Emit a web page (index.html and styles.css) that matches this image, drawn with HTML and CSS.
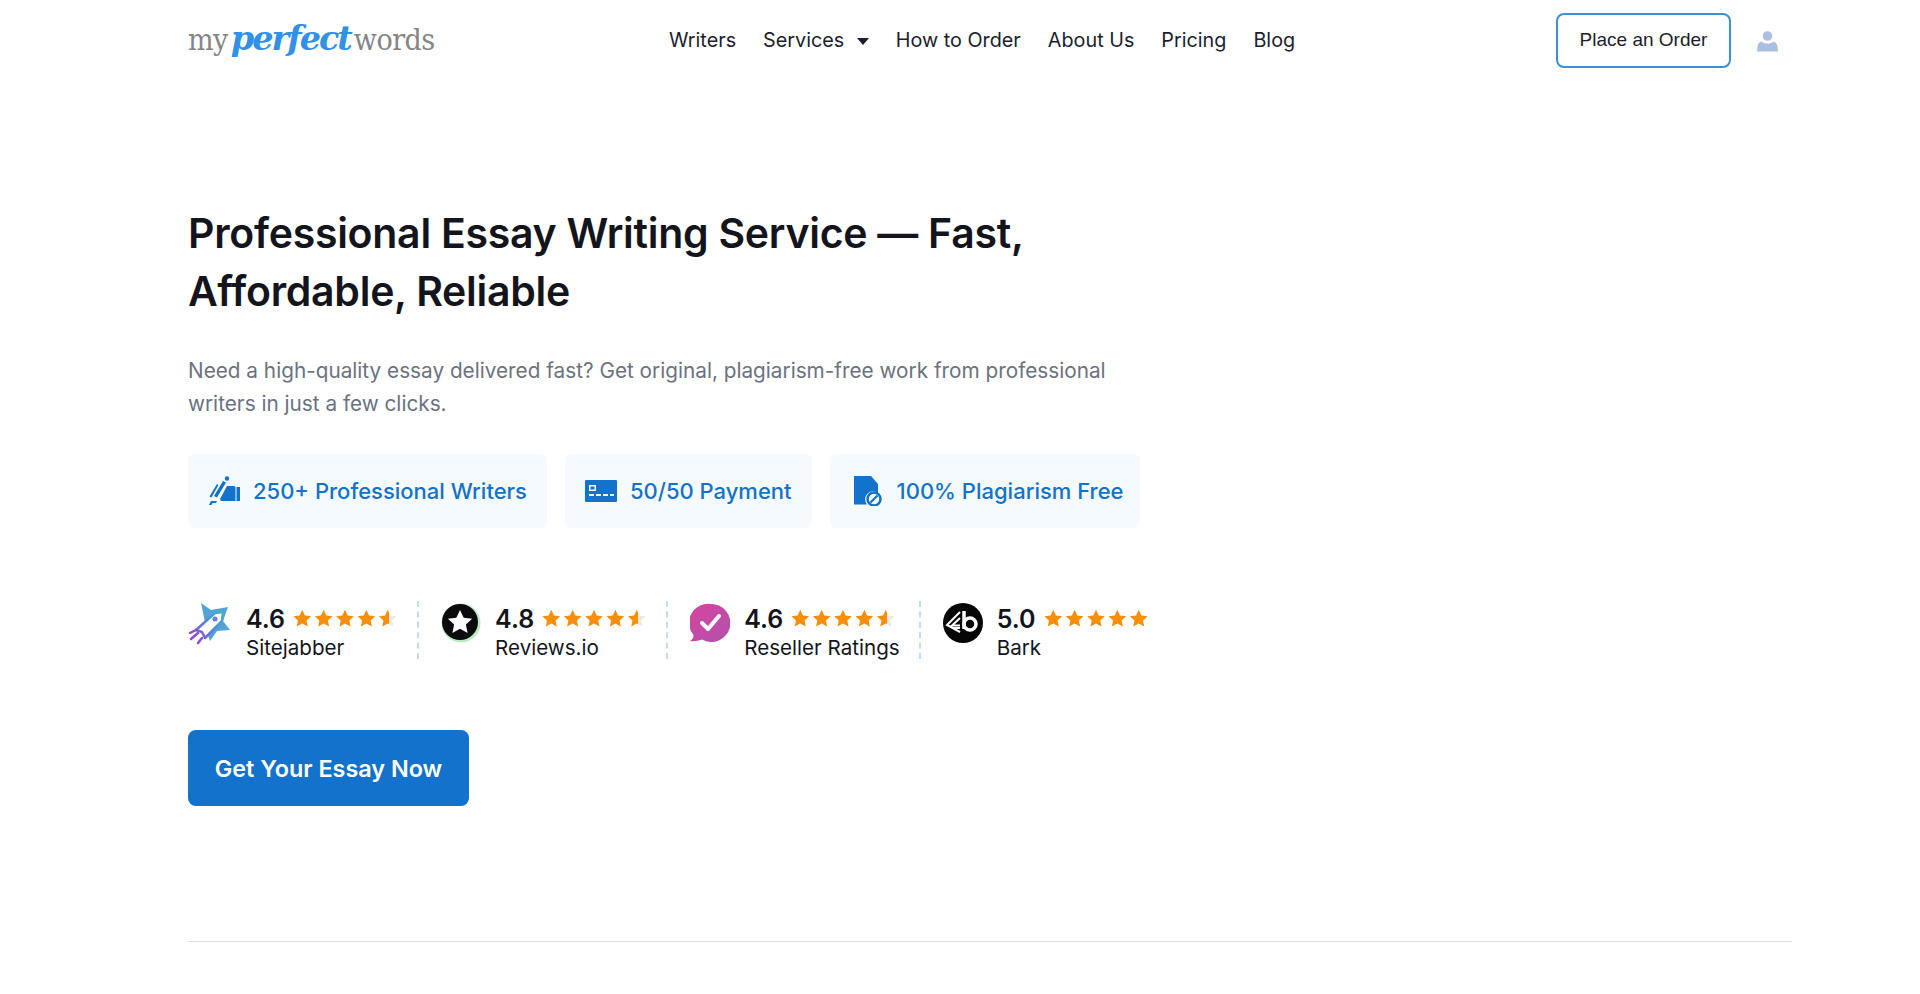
FILE: index.html
```html
<!DOCTYPE html>
<html lang="en">
<head>
    <meta charset="UTF-8">
    <meta name="viewport" content="width=device-width, initial-scale=1.0">
    <title>MyPerfectWords</title>
    <link rel="stylesheet" href="styles.css">
</head>
<body>
    <svg class="defs" width="0" height="0">
        <defs>
            <path id="star" d="M10 0.8l2.8 6 6.500.8-4.800 4.400 1.300 6.400L10 15.200l-5.800 3.200 1.300-6.400L.7 7.600l6.500-.8z"/>
            <linearGradient id="half"><stop offset="55%" stop-color="#f98e0b"/><stop offset="55%" stop-color="#eee9df"/></linearGradient>
            <linearGradient id="jabber" x1="0" y1="1" x2="1" y2="0"><stop offset="0%" stop-color="#8a4fd6"/><stop offset="55%" stop-color="#4f8fd8"/><stop offset="100%" stop-color="#3fb4c4"/></linearGradient>
            <linearGradient id="pink" x1="0" y1="0" x2="1" y2="1"><stop offset="0%" stop-color="#d8449e"/><stop offset="100%" stop-color="#b052ae"/></linearGradient>
        </defs>
    </svg>

    <header class="header">
        <a class="logo" href="#"><span class="logo-my">my</span><span class="logo-perfect">perfect</span><span class="logo-my">words</span></a>
        <nav class="nav">
            <a href="#">Writers</a>
            <a href="#" class="has-caret">Services <span class="caret"></span></a>
            <a href="#">How to Order</a>
            <a href="#">About Us</a>
            <a href="#">Pricing</a>
            <a href="#">Blog</a>
        </nav>
        <div class="header-actions">
            <a class="order-btn" href="#">Place an Order</a>
            <svg class="user-icon" viewBox="0 0 21 21" width="21" height="21"><circle cx="10.500" cy="5" r="4.800"/><path d="M4.500 10.500c1.500 1.500 3.800 2 6 2s4.500-.5 6-2c2 .5 3.500 2 3.900 4.500l.6 5.500H0l.6-5.500c.4-2.500 1.900-4 3.900-4.500z"/></svg>
        </div>
    </header>

    <main class="hero">
        <h1>Professional Essay Writing Service — Fast,<br>Affordable, Reliable</h1>
        <p class="lead">Need a high-quality essay delivered fast? Get original, plagiarism-free work from professional<br>writers in just a few clicks.</p>

        <div class="features">
            <div class="feature feature-writers">
                <svg viewBox="0 0 32 30" width="32" height="30"><circle cx="19" cy="2.500" r="2.200"/><path d="M15 5l3 1.500-9 15-3-1.500z"/><path d="M9 8l1.500 1-7 12.500-2-1z"/><path d="M12 23l7-13h7c1 0 1.500 1 1.500 2v13H13z"/><path d="M28.500 11h3.500v14h-3.500z"/><path d="M1 29l2-4h6l-1 2H4.500l-1 2z"/></svg>
                <span>250+ Professional Writers</span>
            </div>
            <div class="feature feature-pay">
                <svg viewBox="0 0 32 22" width="32" height="22"><path fill-rule="evenodd" d="M1 0h30a1 1 0 0 1 1 1v20a1 1 0 0 1-1 1H1a1 1 0 0 1-1-1V1a1 1 0 0 1 1-1zM4 5v6h7V5zm1.500 1.500h4v3h-4zM4 14v2h5v-2zm7 0v2h5v-2zm7 0v2h5v-2zm7 0v2h4v-2z"/></svg>
                <span>50/50 Payment</span>
            </div>
            <div class="feature feature-plag">
                <svg viewBox="0 0 28 30" width="28" height="30"><path d="M0 0h17l7 8v9a8 8 0 0 0-11 11.500H0z"/><circle cx="20" cy="23" r="6.500" fill="none" stroke="currentColor" stroke-width="2.500"/><path d="M16.500 26.500l7-7" stroke="currentColor" stroke-width="2.200"/></svg>
                <span>100% Plagiarism Free</span>
            </div>
        </div>

        <div class="ratings">
            <div class="rating">
                <svg class="rating-logo" viewBox="0 0 44 44" width="44" height="44">
                    <path d="M13 2l10 7 17-3-5 14 7 9-13 1-7 10-3-9" fill="#52a4d6"/>
                    <path d="M8 29L27 12l8-1-1 9-17 17-3-6z" fill="#fff" stroke="url(#jabber)" stroke-width="2.500" stroke-linejoin="round"/>
                    <circle cx="27" cy="18" r="2.500" fill="#6a7fd6"/>
                    <path d="M2 32l6-3M3 38l7-6M10 42l4-5" stroke="#8a4fd6" stroke-width="2.500" fill="none" stroke-linecap="round"/>
                </svg>
                <div class="rating-body">
                    <div class="score">4.6
                        <svg class="stars" viewBox="0 0 110 20" width="106" height="19"><use href="#star"/><use href="#star" x="22.500"/><use href="#star" x="45"/><use href="#star" x="67.500"/><use href="#star" x="90" fill="url(#half)"/></svg>
                    </div>
                    <div class="rating-name">Sitejabber</div>
                </div>
            </div>
            <div class="rating">
                <svg class="rating-logo" viewBox="0 0 40 40" width="40" height="40">
                    <circle cx="20" cy="20" r="19.500" fill="#b9ecc0"/>
                    <circle cx="19" cy="19" r="18" fill="#0b0b0d"/>
                    <path d="M19 7l3.700 7.800 8.400 1-6.200 5.800 1.700 8.400-7.600-4.200L11.400 30l1.700-8.400L6.900 15.800l8.400-1z" fill="#fff"/>
                </svg>
                <div class="rating-body">
                    <div class="score">4.8
                        <svg class="stars" viewBox="0 0 110 20" width="106" height="19"><use href="#star"/><use href="#star" x="22.500"/><use href="#star" x="45"/><use href="#star" x="67.500"/><use href="#star" x="90" fill="url(#half)"/></svg>
                    </div>
                    <div class="rating-name">Reviews.io</div>
                </div>
            </div>
            <div class="rating">
                <svg class="rating-logo" viewBox="0 0 40 40" width="40" height="40">
                    <path d="M21 1a19 19 0 1 1-9 35.500C8 38 4 38.500 0 38c2.500-1.500 3.500-3.500 3.500-6A19 19 0 0 1 21 1z" fill="url(#pink)"/>
                    <path d="M12 20l6 6L29 13" fill="none" stroke="#fff" stroke-width="4" stroke-linecap="round" stroke-linejoin="round"/>
                </svg>
                <div class="rating-body">
                    <div class="score">4.6
                        <svg class="stars" viewBox="0 0 110 20" width="106" height="19"><use href="#star"/><use href="#star" x="22.500"/><use href="#star" x="45"/><use href="#star" x="67.500"/><use href="#star" x="90" fill="url(#half)"/></svg>
                    </div>
                    <div class="rating-name">Reseller Ratings</div>
                </div>
            </div>
            <div class="rating">
                <svg class="rating-logo" viewBox="0 0 40 40" width="40" height="40">
                    <circle cx="20" cy="20" r="20" fill="#060606"/>
                    <path d="M17 9L4 22l13 7M17 15L9 22.500h8M10 25h7" fill="none" stroke="#fff" stroke-width="2"/>
                    <path d="M21 8v18" stroke="#fff" stroke-width="3.500"/>
                    <circle cx="27" cy="21" r="6" fill="none" stroke="#fff" stroke-width="3.500"/>
                </svg>
                <div class="rating-body">
                    <div class="score">5.0
                        <svg class="stars" viewBox="0 0 110 20" width="106" height="19"><use href="#star"/><use href="#star" x="22.500"/><use href="#star" x="45"/><use href="#star" x="67.500"/><use href="#star" x="90"/></svg>
                    </div>
                    <div class="rating-name">Bark</div>
                </div>
            </div>
        </div>

        <a class="cta" href="#">Get Your Essay Now</a>
    </main>

    <hr class="divider">
</body>
</html>
```

FILE: styles.css
```css
* {
    box-sizing: border-box;
}

body {
    margin: 0;
    height: 994px;
    overflow: hidden;
    padding: 0 128px 0 188px;
    background-color: #fff;
    font-family: Inter, "Open Sans", sans-serif;
    color: #14151c;
}

a {
    color: inherit;
    text-decoration: none;
}

.defs {
    position: absolute;
}

/* header */
.header {
    display: flex;
    align-items: center;
    height: 80px;
}

.logo {
    display: flex;
    align-items: baseline;
    width: 250px;
    white-space: nowrap;
    margin-top: -4px;
}

.logo-my {
    font-family: "DejaVu Serif Condensed", "DejaVu Serif", serif;
    font-stretch: condensed;
    font-size: 30px;
    letter-spacing: -0.5px;
    color: #858585;
}

.logo-perfect {
    font-family: "DejaVu Serif", serif;
    font-size: 33.500px;
    font-weight: bold;
    font-style: italic;
    letter-spacing: -2px;
    color: #2f91e8;
    margin: 0 3px;
}

.nav {
    display: flex;
    align-items: center;
    gap: 27px;
    margin-left: 231px;
    font-size: 19.800px;
    color: #1d1e2c;
}

.caret {
    display: inline-block;
    width: 0;
    height: 0;
    margin-left: 7px;
    vertical-align: 2px;
    border-left: 6.500px solid transparent;
    border-right: 6.500px solid transparent;
    border-top: 7px solid #1d1e2c;
}

.header-actions {
    display: flex;
    align-items: center;
    margin-left: auto;
}

.order-btn {
    display: flex;
    align-items: center;
    justify-content: center;
    width: 175px;
    height: 55px;
    border: 2px solid #3f8fd6;
    border-radius: 8px;
    font-family: "Liberation Sans", Arial, sans-serif;
    font-size: 19px;
    color: #1d1e2c;
}

.user-icon {
    margin: 2px 14px 0 26px;
    fill: #aabfe2;
}

/* hero */
.hero {
    padding-top: 124px;
}

h1 {
    margin: 0;
    font-size: 41px;
    font-weight: 600;
    letter-spacing: -0.27px;
    line-height: 58px;
    color: #14151c;
}

.lead {
    margin: 34px 0 0;
    font-size: 20.750px;
    line-height: 33px;
    color: #6b7280;
}

.features {
    display: flex;
    gap: 18px;
    margin-top: 34px;
}

.feature {
    display: flex;
    align-items: center;
    gap: 13px;
    height: 74px;
    padding: 0 20px;
    border-radius: 6px;
    background-color: #f5faff;
    color: #1272cc;
    font-size: 22px;
    font-weight: 500;
}

.feature-plag {
    gap: 15px;
    padding: 0 16px 0 24px;
}

.feature svg {
    fill: currentColor;
    flex-shrink: 0;
}

.ratings {
    display: flex;
    margin-top: 73px;
}

.rating {
    display: flex;
    align-items: center;
    gap: 14px;
    height: 58px;
    padding-right: 19px;
    margin-right: 22px;
    border-right: 2px dashed #c5dcf0;
}

.rating:last-child {
    border-right: 0;
}

.rating-logo {
    flex-shrink: 0;
    margin-bottom: 14px;
}

.rating-body {
    padding-top: 5px;
}

.score {
    display: flex;
    align-items: center;
    gap: 7px;
    font-size: 25px;
    font-weight: 600;
    line-height: 30px;
}

.stars {
    fill: #f98e0b;
}

.rating-name {
    font-size: 20.600px;
    line-height: 28px;
}

.cta {
    display: flex;
    align-items: center;
    justify-content: center;
    width: 281px;
    height: 76px;
    margin-top: 71px;
    border-radius: 8px;
    background-color: #1272cc;
    color: #fff;
    font-size: 23.400px;
    font-weight: 600;
}

.divider {
    margin: 135px 0 0;
    border: 0;
    border-top: 1px solid #d5e2ee;
}
```
